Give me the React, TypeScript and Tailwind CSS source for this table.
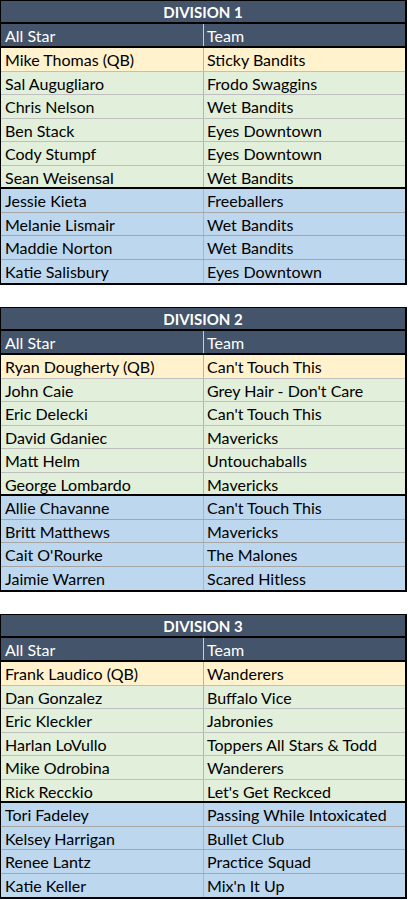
type Row = { name: string; team: string }

const divisions: { title: string; qb: Row; green: Row[]; blue: Row[] }[] = [
  {
    title: 'DIVISION 1',
    qb: { name: 'Mike Thomas (QB)', team: 'Sticky Bandits' },
    green: [
      { name: 'Sal Augugliaro', team: 'Frodo Swaggins' },
      { name: 'Chris Nelson', team: 'Wet Bandits' },
      { name: 'Ben Stack', team: 'Eyes Downtown' },
      { name: 'Cody Stumpf', team: 'Eyes Downtown' },
      { name: 'Sean Weisensal', team: 'Wet Bandits' },
    ],
    blue: [
      { name: 'Jessie Kieta', team: 'Freeballers' },
      { name: 'Melanie Lismair', team: 'Wet Bandits' },
      { name: 'Maddie Norton', team: 'Wet Bandits' },
      { name: 'Katie Salisbury', team: 'Eyes Downtown' },
    ],
  },
  {
    title: 'DIVISION 2',
    qb: { name: 'Ryan Dougherty (QB)', team: "Can't Touch This" },
    green: [
      { name: 'John Caie', team: "Grey Hair - Don't Care" },
      { name: 'Eric Delecki', team: "Can't Touch This" },
      { name: 'David Gdaniec', team: 'Mavericks' },
      { name: 'Matt Helm', team: 'Untouchaballs' },
      { name: 'George Lombardo', team: 'Mavericks' },
    ],
    blue: [
      { name: 'Allie Chavanne', team: "Can't Touch This" },
      { name: 'Britt Matthews', team: 'Mavericks' },
      { name: "Cait O'Rourke", team: 'The Malones' },
      { name: 'Jaimie Warren', team: 'Scared Hitless' },
    ],
  },
  {
    title: 'DIVISION 3',
    qb: { name: 'Frank Laudico (QB)', team: 'Wanderers' },
    green: [
      { name: 'Dan Gonzalez', team: 'Buffalo Vice' },
      { name: 'Eric Kleckler', team: 'Jabronies' },
      { name: 'Harlan LoVullo', team: 'Toppers All Stars & Todd' },
      { name: 'Mike Odrobina', team: 'Wanderers' },
      { name: 'Rick Recckio', team: "Let's Get Reckced" },
    ],
    blue: [
      { name: 'Tori Fadeley', team: 'Passing While Intoxicated' },
      { name: 'Kelsey Harrigan', team: 'Bullet Club' },
      { name: 'Renee Lantz', team: 'Practice Squad' },
      { name: 'Katie Keller', team: "Mix'n It Up" },
    ],
  },
]

function DataRow({ row, bg, border }: { row: Row; bg: string; border: string }) {
  return (
    <div className={`flex h-[23.5px] ${bg} ${border}`}>
      <div className="w-[203px] shrink-0 border-r border-[#b4b4b4] pl-[4px] leading-[23px] whitespace-nowrap">{row.name}</div>
      <div className="flex-1 pl-[3px] leading-[23px] whitespace-nowrap">{row.team}</div>
    </div>
  )
}

export default function App() {
  return (
    <div className="w-[408px] bg-white text-[16px] text-black flex flex-col gap-[22px]" style={{ fontFamily: 'Lato, "Liberation Sans", sans-serif' }}>
      {divisions.map(d => (
        <div key={d.title} className="w-[407px] border-t border-l border-r-2 border-b-2 border-black">
          <div className="h-[23px] bg-[#44546a] border-b-2 border-black text-white font-bold text-[15px] text-center leading-[22px]">
            {d.title}
          </div>
          <div className="flex h-[24px] bg-[#44546a] border-b-2 border-black text-white">
            <div className="w-[203px] shrink-0 border-r border-[#c8cdd4] pl-[4px] leading-[23px]">All Star</div>
            <div className="flex-1 pl-[3px] leading-[23px]">Team</div>
          </div>
          <DataRow row={d.qb} bg="bg-[#fff2cc]" border="border-b border-[#bfbfbf]" />
          {d.green.map((r, i) => (
            <DataRow
              key={r.name}
              row={r}
              bg="bg-[#e2efda]"
              border={i === d.green.length - 1 ? 'border-b-2 border-black' : 'border-b border-[#bfbfbf]'}
            />
          ))}
          {d.blue.map((r, i) => (
            <DataRow
              key={r.name}
              row={r}
              bg="bg-[#bdd7ee]"
              border={i === d.blue.length - 1 ? '' : 'border-b border-[#a6a6a6]'}
            />
          ))}
        </div>
      ))}
    </div>
  )
}
